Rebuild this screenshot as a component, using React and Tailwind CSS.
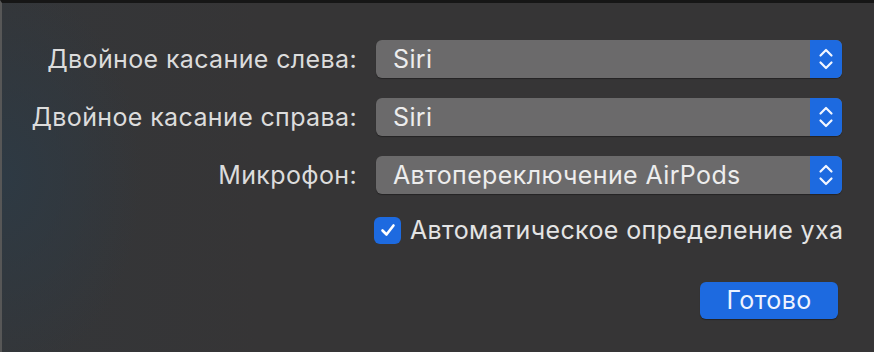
import React from 'react';

const labelFont = { fontFamily: 'Inter, "Noto Sans", sans-serif' };

function Stepper() {
  return (
    <div className="flex h-full w-[32px] items-center justify-center rounded-r-[6px] bg-[#1d6ae0]">
      <svg width="16" height="26" viewBox="0 0 16 26" fill="none" stroke="#f2f6ff" strokeWidth="2.2" strokeLinecap="round" strokeLinejoin="round">
        <path d="M2.5 9.5 L8 4 L13.5 9.5" />
        <path d="M2.5 16.5 L8 22 L13.5 16.5" />
      </svg>
    </div>
  );
}

function Select({ value }) {
  return (
    <div className="flex h-[38px] w-[466px] items-stretch rounded-[6px] bg-[#6b6a6b] shadow-[0_1px_1px_rgba(0,0,0,0.35)]">
      <div className="flex flex-1 items-center pl-[17px] text-[25px] leading-none tracking-[0.37px] text-[#ededed]">{value}</div>
      <Stepper />
    </div>
  );
}

function Row({ label, value }) {
  return (
    <div className="flex items-center">
      <div className="w-[355px] text-right text-[25px] leading-none tracking-[0.37px] text-[#dcdcdc]">{label}</div>
      <div className="ml-[19px]">
        <Select value={value} />
      </div>
    </div>
  );
}

export default function App() {
  return (
    <div
      className="relative h-[352px] w-[874px] overflow-hidden border-t-[3px] border-l-[2px] border-t-[#161616] border-l-[#575757] bg-[radial-gradient(ellipse_140px_200px_at_0%_50%,#2e3a44_0%,rgba(54,53,54,0)_100%),linear-gradient(90deg,#343639_0%,#363536_30%,#363536_100%)] bg-[#363536]"
      style={labelFont}
    >
      <div className="flex flex-col gap-[20px] pt-[37px]">
        <Row label="Двойное касание слева:" value="Siri" />
        <Row label="Двойное касание справа:" value="Siri" />
        <Row label="Микрофон:" value="Автопереключение AirPods" />
      </div>

      <div className="mt-[22px] flex items-center pl-[372px]">
        <div className="flex h-[27px] w-[27px] items-center justify-center rounded-[6px] bg-[#1d6ae0]">
          <svg width="18" height="18" viewBox="0 0 18 18" fill="none" stroke="#ffffff" strokeWidth="2.6" strokeLinecap="round" strokeLinejoin="round">
            <path d="M3.5 9.5 L7.5 13.5 L14.5 4.5" />
          </svg>
        </div>
        <span className="ml-[9px] text-[25px] leading-[28px] tracking-[0.37px] text-[#e4e4e4]">Автоматическое определение уха</span>
      </div>

      <div className="mt-[38px] flex justify-end pr-[36px]">
        <button className="flex h-[37px] w-[138px] items-center justify-center rounded-[6px] bg-[#1d6ae0] text-[25px] leading-none tracking-[0.37px] text-[#eef3ff] shadow-[0_1px_1px_rgba(0,0,0,0.35)]">
          Готово
        </button>
      </div>
    </div>
  );
}
